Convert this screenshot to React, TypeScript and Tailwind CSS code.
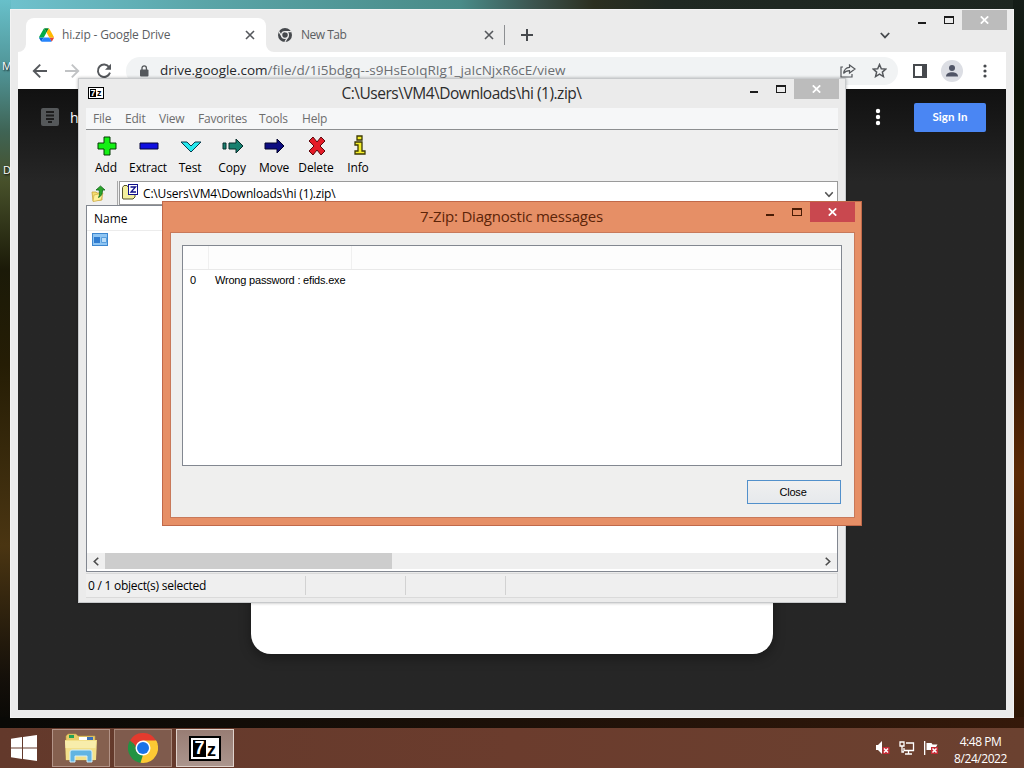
import React from "react";
import clsx from "clsx";

type IconProps = { className?: string };

const menuItems = [
  { label: "File", width: "w-[32px]" },
  { label: "Edit", width: "w-[34px]" },
  { label: "View", width: "w-[39px]" },
  { label: "Favorites", width: "w-[61px]" },
  { label: "Tools", width: "w-[43px]" },
  { label: "Help", width: "w-[40px]" },
];

const ArrowIcon = ({ className }: IconProps) => (
  <svg className={className} width="16" height="16" viewBox="0 0 16 16" fill="none" stroke="currentColor" strokeWidth="1.9">
    <path d="M15 8H2M8.2 1.6L1.8 8l6.4 6.4" />
  </svg>
);

const ReloadIcon = () => (
  <svg width="16" height="16" viewBox="0 0 16 16" fill="none">
    <path d="M13.2 4.2A6.2 6.2 0 1 0 14 9.6" stroke="#55585c" strokeWidth="1.9" />
    <path d="M15 .8v6H9z" fill="#55585c" />
  </svg>
);

const DriveIcon = () => (
  <svg width="15" height="14" viewBox="0 0 87.3 78">
    <path d="M6.6 66.85l3.85 6.65c.8 1.4 1.95 2.5 3.3 3.3L27.5 53H0c0 1.55.4 3.1 1.2 4.5z" fill="#0066da" />
    <path d="M43.65 25L29.9 1.2c-1.35.8-2.5 1.9-3.3 3.3l-25.4 44A9.06 9.06 0 0 0 0 53h27.5z" fill="#00ac47" />
    <path d="M73.55 76.8c1.35-.8 2.5-1.9 3.3-3.3l1.6-2.75L86.1 57.5c.8-1.4 1.2-2.95 1.2-4.5H59.8l5.85 11.5z" fill="#ea4335" />
    <path d="M43.65 25L57.4 1.2C56.05.4 54.5 0 52.9 0H34.4c-1.6 0-3.15.45-4.5 1.2z" fill="#00832d" />
    <path d="M59.8 53H27.5L13.75 76.8c1.35.8 2.9 1.2 4.5 1.2h50.8c1.6 0 3.15-.45 4.5-1.2z" fill="#2684fc" />
    <path d="M73.4 26.5L60.7 4.5c-.8-1.4-1.95-2.5-3.3-3.3L43.65 25 59.8 53h27.45c0-1.55-.4-3.1-1.2-4.5z" fill="#ffba00" />
  </svg>
);

const ChromeMonoIcon = () => (
  <svg width="14" height="14" viewBox="0 0 14 14" fill="none">
    <circle cx="7" cy="7" r="7" fill="#46494d" />
    <circle cx="7" cy="7" r="3.4" fill="#46494d" stroke="#ebebeb" strokeWidth="1.3" />
    <path d="M7 3.6h6.3M4 8.7L.9 3.5M10 8.7l-3.1 5.2" stroke="#ebebeb" strokeWidth="1.2" />
  </svg>
);

const ChromeIcon = () => (
  <svg width="30" height="30" viewBox="0 0 48 48">
    <path d="M24 24L3.2 12A24 24 0 0 1 44.8 12z" fill="#e33b2e" />
    <path d="M24 24L44.8 12A24 24 0 0 1 24 48z" fill="#fcc934" />
    <path d="M24 24L24 48A24 24 0 0 1 3.2 12z" fill="#229342" />
    <path d="M24 12h20.8a24 24 0 0 1 2.5 6L34 20z" fill="#fcc934" />
    <path d="M34.4 30L24 48l-4-.4 4-13z" fill="#fcc934" />
    <path d="M13.6 30L3.2 12 24 12v5z" fill="#e33b2e" />
    <path d="M13.6 30L3.2 12l6 5 6 9z" fill="#229342" />
    <circle cx="24" cy="24" r="12" fill="#fff" />
    <circle cx="24" cy="24" r="9.6" fill="#1a73e8" />
  </svg>
);

const CrossIcon = ({ className }: IconProps) => (
  <svg className={className} width="10" height="10" viewBox="0 0 10 10" fill="none" stroke="currentColor" strokeWidth="1.6">
    <path d="M1 1l8 8M9 1L1 9" />
  </svg>
);

const ChevronIcon = ({ className }: IconProps) => (
  <svg className={className} width="10" height="7" viewBox="0 0 10 7" fill="none" stroke="currentColor" strokeWidth="1.8">
    <path d="M.8 1L5 5.4 9.2 1" />
  </svg>
);

const SevenZip = ({ big }: { big?: boolean }) => (
  <div
    className={clsx(
      "flex shrink-0 items-center justify-center border-black bg-white font-['Liberation_Sans'] font-bold leading-none",
      big ? "h-[25px] w-[32px] border-2 text-[18px]" : "h-[12px] w-[16px] border text-[9px]"
    )}
  >
    <span className={clsx("flex items-center justify-center bg-black text-white", big ? "h-[17px] w-[13px]" : "h-[8px] w-[6px]")}>
      7
    </span>
    <span className={clsx("text-black", big ? "w-[11px] pt-[3px] pl-px" : "w-[6px] pl-px")}>z</span>
  </div>
);

// minimize / maximize / close trio at the right end of a title bar
const WindowControls = ({ active }: { active?: boolean }) => (
  <div className={clsx("flex h-[20px] shrink-0", active ? "text-[#4a1c05]" : "text-[#1c1c1c]")}>
    <svg width="52" height="20" viewBox="0 0 52 20" shapeRendering="crispEdges">
      <path d="M8 12h8v2H8zM34 6h10v8H34zm1 2v5h8V8z" fill="currentColor" fillRule="evenodd" />
    </svg>
    <div className={clsx("flex w-[45px] items-center justify-center", active ? "bg-[#c9484f]" : "bg-[#bcbcbc]")}>
      <svg width="9" height="8" viewBox="0 0 9 8" fill="none" stroke="#fff" strokeWidth="1.8">
        <path d="M.8.4l7.4 7.2M8.2.4L.8 7.6" />
      </svg>
    </div>
  </div>
);

const DriveWindow = () => (
  <div className="absolute left-[10px] top-[9px] flex h-[709px] w-[1004px] flex-col border border-[#f3f3f3] bg-[#ebebeb] px-[7px] pb-[7px]">
    <div className="flex h-[42px] shrink-0">
      <div className="relative ml-[8px] mt-[8px] flex w-[240px] items-center rounded-t-[8px] bg-white pl-[13px]">
        <DriveIcon />
        <span className="ml-[8px] w-[183px] text-[12px] tracking-[-0.16px] text-[#5b5e62]">hi.zip - Google Drive</span>
        <CrossIcon className="text-[#55585c]" />
        <svg className="absolute -left-[8px] bottom-0" width="256" height="8" viewBox="0 0 256 8" fill="#fff">
          <path d="M0 8a8 8 0 0 0 8-8v8zM248 0a8 8 0 0 0 8 8h-8z" />
        </svg>
      </div>
      <div className="mt-[8px] flex items-center pl-[12px]">
        <ChromeMonoIcon />
        <span className="ml-[9px] w-[183px] text-[12px] tracking-[-0.5px] text-[#5b5e62]">New Tab</span>
        <CrossIcon className="text-[#55585c]" />
        <div className="ml-[10px] h-[20px] w-px bg-[#8d8f92]" />
        <svg className="ml-[16px]" width="12" height="12" viewBox="0 0 12 12" stroke="#46494d" strokeWidth="2">
          <path d="M6 0v12M0 6h12" />
        </svg>
      </div>
      <div className="ml-auto mr-[20px] mt-[22px]">
        <ChevronIcon className="text-[#46494d]" />
      </div>
      <div className="-mr-px">
        <WindowControls />
      </div>
    </div>

    <div className="flex h-[37px] shrink-0 items-center bg-white pl-[14px] text-[#55585c]">
      <ArrowIcon />
      <ArrowIcon className="ml-[16px] rotate-180 text-[#c1c3c5]" />
      <div className="ml-[16px]">
        <ReloadIcon />
      </div>
      <div className="ml-[14px] flex h-[28px] w-[772px] items-center rounded-full bg-[#f1f3f4] pl-[13px]">
        <svg width="10" height="12" viewBox="0 0 10 12">
          <rect x="1" y="4.5" width="8.5" height="7" rx="1" fill="#55585c" />
          <path d="M3 5V3a2.2 2.2 0 0 1 4.4 0v2" fill="none" stroke="#55585c" strokeWidth="1.3" />
        </svg>
        <span className="ml-[11px] whitespace-nowrap text-[13.5px] text-[#6b6e72]">
          <span className="text-[#26282b]">drive.google.com</span>/file/d/1i5bdgq--s9HsEoIqRIg1_jaIcNjxR6cE/view
        </span>
        <svg className="ml-auto" width="16" height="14" viewBox="0 0 16 14" fill="none" stroke="#55585c" strokeWidth="1.2">
          <path d="M3 3H1v10h11v-3M9.5 1l5.5 4-5.5 4V6.6C6.5 6.6 5 7.5 3.6 9.5 4 6 6 3.7 9.5 3.4z" />
        </svg>
        <svg className="ml-[16px] mr-[11px]" width="15" height="15" viewBox="0 0 24 24" fill="none" stroke="#55585c" strokeWidth="2.4">
          <path d="M12 2.5l2.9 6.7 7.2.6-5.5 4.8 1.7 7.1L12 17.9l-6.3 3.8 1.7-7.1L1.9 9.8l7.2-.6z" />
        </svg>
      </div>
      <svg className="ml-[15px]" width="14" height="14" viewBox="0 0 14 14">
        <path d="M0 0h14v14H0zM2 2v10h7V2z" fill="#46494d" fillRule="evenodd" />
      </svg>
      <svg className="ml-[14px]" width="22" height="22" viewBox="0 0 22 22">
        <circle cx="11" cy="11" r="11" fill="#dcdee4" />
        <circle cx="11" cy="8" r="3" fill="#505566" />
        <path d="M5 16.5c0-3 3-4.300 6-4.300s6 1.300 6 4.300z" fill="#505566" />
      </svg>
      <svg className="ml-[20px]" width="4" height="14" viewBox="0 0 4 14" fill="#46494d">
        <circle cx="2" cy="2" r="1.6" />
        <circle cx="2" cy="7" r="1.6" />
        <circle cx="2" cy="12" r="1.6" />
      </svg>
    </div>

    <div className="flex flex-1 flex-col justify-between overflow-hidden bg-linear-to-b from-[#111] via-[#262626] via-15% to-[#262626]">
      <div className="flex h-[56px] items-center pl-[23px] pr-[20px] text-white">
        <svg width="18" height="18" viewBox="0 0 18 18">
          <rect width="18" height="18" rx="2" fill="#55585a" />
          <path d="M5 4h8M5 7.5h8M5 11h8M7 14h4" stroke="#1d1d1d" strokeWidth="1.8" />
        </svg>
        <span className="ml-[11px] text-[14px]">h</span>
        <svg className="ml-auto" width="6" height="18" viewBox="0 0 6 18" fill="#fff">
          <circle cx="3" cy="3" r="2.2" />
          <circle cx="3" cy="9" r="2.2" />
          <circle cx="3" cy="15" r="2.2" />
        </svg>
        <button className="ml-[33px] h-[29px] w-[72px] rounded-[2px] bg-[#4a86f3] font-['Lato'] text-[11.5px] font-bold tracking-[0.1px]">
          Sign In
        </button>
      </div>
      <div className="mx-auto mb-[56px] h-[90px] w-[522px] rounded-b-[20px] bg-white shadow-[0_4px_12px_rgba(0,0,0,0.35)]" />
    </div>
  </div>
);

const tools = [
  {
    label: "Add",
    icon: <path d="M9 3h6v6h6v6h-6v6H9v-6H3V9h6z" fill="#14f014" stroke="#053b05" />,
  },
  { label: "Extract", icon: <path d="M3 9h18v6H3z" fill="#0f0fe0" stroke="#04043c" /> },
  { label: "Test", icon: <path d="M2 8h6l4 4 4-4h6L12 18z" fill="#25e9ef" stroke="#063a4c" /> },
  {
    label: "Copy",
    icon: <path d="M2 9h3v6H2zM8 9h7V5l7 7-7 7v-4H8z" fill="#16806f" stroke="#062d2a" />,
  },
  { label: "Move", icon: <path d="M2 9h12V5l7 7-7 7v-4H2z" fill="#0c0c80" stroke="#02022c" /> },
  {
    label: "Delete",
    icon: <path d="M4 7l4-4 4 5 4-5 4 4-5 5 5 5-4 4-4-5-4 5-4-4 5-5z" fill="#e51c28" stroke="#5c070c" />,
  },
  {
    label: "Info",
    icon: <path d="M10 2h5v4h-5zM8 8h7v9h3v3H8v-3h3v-6H8z" fill="#f4ee2b" stroke="#3c3a05" strokeWidth="1.3" />,
  },
];

const FolderUpIcon = () => (
  <svg width="16" height="17" viewBox="0 0 16 17">
    <path d="M1 7h4l1 1h5v7l-9 1z" fill="#f5dc6e" stroke="#c8a33a" strokeWidth=".8" />
    <path d="M3 10l9-2-2 7-8 1.5z" fill="#fff09a" stroke="#c8a33a" strokeWidth=".6" />
    <path d="M5 5l4.5-4L14 5h-2.500c0 4-1 6-4 7.500C9 10 8.500 7 8 5z" fill="#2ca52c" stroke="#14691c" strokeWidth=".8" />
  </svg>
);

const ArchiveIcon = () => (
  <svg width="17" height="16" viewBox="0 0 17 16">
    <path d="M.5 3.5L2 1.500h3l1 1.500h7v10l-2 2H1l-.5-1z" fill="#f3ef9e" stroke="#55522b" />
    <rect x="6.5" y=".5" width="9" height="10" fill="#fff" stroke="#10108a" />
    <path d="M8.500 3h5l-4.500 5h5" fill="none" stroke="#10108a" strokeWidth="1.3" />
  </svg>
);

const FileManagerWindow = () => (
  <div className="absolute left-[78px] top-[78px] flex h-[525px] w-[768px] flex-col border border-[#c7c9cb] bg-[#ebebeb] px-[7px] pb-[5px] text-black shadow-[0_0_3px_rgba(0,0,0,0.3)]">
    <div className="flex h-[29px] shrink-0">
      <div className="pl-[2px] pt-[8px]">
        <SevenZip />
      </div>
      <div className="ml-[77px] flex-1 pt-px text-center text-[15.5px] leading-[26px] tracking-[-0.48px] text-[#2c2c2c]">
        C:\Users\VM4\Downloads\hi (1).zip\
      </div>
      <div className="-mr-px">
        <WindowControls />
      </div>
    </div>
    <div className="flex h-[22px] shrink-0 items-center border-b border-[#8c8e90] bg-[#f6f7f8] pl-[7px] text-[12px] tracking-[-0.2px] text-[#6d6d6d]">
      {menuItems.map((item) => (
        <span key={item.label} className={clsx("shrink-0", item.width)}>
          {item.label}
        </span>
      ))}
    </div>
    <div className="flex h-[51px] shrink-0 bg-[#efefef]">
      {tools.map((tool) => (
        <div key={tool.label} className="-ml-px mr-px flex w-[42px] flex-col items-center pt-[4px]">
          <svg className="ml-[2px]" width="24" height="24" viewBox="0 0 24 24">
            {tool.icon}
          </svg>
          <span className="pt-px text-[12px] leading-[18px] tracking-[-0.15px]">{tool.label}</span>
        </div>
      ))}
    </div>
    <div className="flex h-[24px] shrink-0 bg-[#efefef]">
      <div className="flex w-[32px] items-center border-r border-[#a8a8a8] pl-[5px]">
        <FolderUpIcon />
      </div>
      <div className="ml-px flex flex-1 items-start border border-[#9a9a9a] bg-white pl-[2px] pr-[3px] pt-[2px]">
        <ArchiveIcon />
        <span className="ml-[4px] flex-1 pt-px text-[12px] leading-[18px] tracking-[-0.18px]">C:\Users\VM4\Downloads\hi (1).zip\</span>
        <ChevronIcon className="mt-[7px] scale-90 text-[#555]" />
      </div>
    </div>
    <div className="flex h-[367px] shrink-0 flex-col border border-[#828790] bg-white">
      <div className="flex h-[25px] w-full items-center border-b border-[#ececec] pl-[7px] pt-[2px] text-[12px]">Name</div>
      <div className="pl-[5px] pt-[2px]">
        <svg width="16" height="13" viewBox="0 0 16 13">
          <rect x=".5" y=".5" width="15" height="12" fill="#8ec5f3" stroke="#3c86cf" />
          <path d="M2 4h6v6H2z" fill="#2f7cd0" />
          <path d="M9.500 4.500h5v5h-5z" fill="#b9dcf8" stroke="#5a9fdd" />
        </svg>
      </div>
      <div className="mt-auto mb-[2px] flex h-[16px] items-center bg-[#efefef] text-[#4c4c4c]">
        <div className="flex w-[18px] justify-center">
          <ChevronIcon className="scale-90 rotate-90" />
        </div>
        <div className="h-full w-[287px] bg-[#cdcdcd]" />
        <div className="ml-auto flex w-[18px] justify-center">
          <ChevronIcon className="scale-90 -rotate-90" />
        </div>
      </div>
    </div>
    <div className="mt-px flex flex-1 items-stretch border-y border-r border-[#dadada] bg-[#efefef] text-[12px] leading-[22px]">
      <span className="my-[2px] w-[220px] border-r border-[#d2d2d2] pl-[2px] leading-[19px] tracking-[-0.25px]">0 / 1 object(s) selected</span>
      <span className="my-[2px] w-[100px] border-r border-[#d2d2d2]" />
      <span className="my-[2px] w-[100px] border-r border-[#d2d2d2]" />
    </div>
  </div>
);

const DiagnosticDialog = () => (
  <div className="absolute left-[162px] top-[201px] flex h-[325px] w-[700px] flex-col border border-[#c0694a] bg-[#e68f66] px-[7px] pb-[7px] text-black">
    <div className="flex h-[30px] shrink-0">
      <div className="ml-[95px] flex-1 text-center text-[15px] leading-[28px] tracking-[-0.2px] text-[#5c2408]">
        7-Zip: Diagnostic messages
      </div>
      <div className="-mr-px">
        <WindowControls active />
      </div>
    </div>
    <div className="-mr-px flex flex-1 flex-col border border-[#c8795a] bg-[#efefee] pl-[11px] pr-[12px] pt-[12px]">
      <div className="h-[221px] border border-[#828790] bg-white font-['Liberation_Sans'] text-[11px] tracking-[-0.2px]">
        <div className="flex h-[24px] border-b border-[#e9e9e9] bg-[#fdfdfd]">
          <div className="w-[26px] border-r border-[#f0f0f0]" />
          <div className="w-[143px] border-r border-[#f0f0f0]" />
        </div>
        <div className="flex h-[20px] items-center pt-px">
          <span className="w-[25px] pl-[7px]">0</span>
          <span className="pl-[7px]">Wrong password : efids.exe</span>
        </div>
      </div>
      <button className="mr-px mt-[14px] h-[24px] w-[94px] self-end border border-[#5290cb] bg-linear-to-b from-[#f0f0f0] to-[#e6e9ec] pr-[2px] font-['Liberation_Sans'] text-[11px] tracking-[-0.2px]">
        Close
      </button>
    </div>
  </div>
);

const Taskbar = () => (
  <div className="absolute inset-x-0 bottom-0 flex h-[40px] items-center bg-linear-to-r from-[#63392b] via-[#6b3c2d] to-[#6b4130]">
    <svg className="ml-[11px]" width="26" height="26" viewBox="0 0 26 26" fill="#fff">
      <path d="M0 3.700l11-1.600v10.400H0zM12 2l14-2v12.500H12zM0 13.500h11v10.400L0 22.300zM12 13.500h14V26l-14-2z" />
    </svg>
    <div className="ml-[15px] flex h-[38px] gap-[4px]">
      <div className="flex w-[58px] items-center justify-center border border-[#b39488] bg-[#85604f]">
        <svg width="32" height="30" viewBox="0 0 32 30">
          <path d="M1 3l2-2h8l2 2h17v24H1z" fill="#e9cb68" stroke="#b99b45" strokeWidth=".6" />
          <path d="M4 2h5v3H4z" fill="#25a256" />
          <path d="M14 4h8v4h-8z" fill="#fff" />
          <path d="M22 4h6v3h-6z" fill="#3c6fb5" />
          <path d="M0 7h32l-1 20H1z" fill="#f3e08a" />
          <path d="M0 8h31l-.5 7H.5z" fill="#f8edab" />
          <path d="M5 29V19q0-2 2-2h18q2 0 2 2v10h-5v-6H10v6z" fill="#62b4e2" stroke="#d3effa" />
        </svg>
      </div>
      <div className="flex w-[58px] items-center justify-center border border-[#a78779] bg-[#7f5b4d]">
        <ChromeIcon />
      </div>
      <div className="flex w-[58px] items-center justify-center border border-[#e0d2cb] bg-linear-to-b from-[#987d74] to-[#ab958d]">
        <SevenZip big />
      </div>
    </div>
    <div className="ml-auto flex items-center gap-[8px]">
      <svg width="16" height="16" viewBox="0 0 16 16">
        <path d="M1 5h2l4-4v13l-4-4H1z" fill="#fff" />
        <path d="M7.500 7h7v7h-7z" fill="#c62c36" />
        <path d="M9 8.500l4 4M13 8.500l-4 4" stroke="#fff" strokeWidth="1.5" />
      </svg>
      <svg width="16" height="16" viewBox="0 0 16 16" fill="none" stroke="#fff" strokeWidth="1.3">
        <path d="M7 3h7.500v7.500H5V8M9.500 10.500v3M6 14h7M1 2h4v4H1zM3 6v6h2" />
      </svg>
      <svg width="16" height="16" viewBox="0 0 16 16">
        <path d="M1 1h1.300v14H1zM3.500 3h5l1 1.500h5L13 7l1.500 3h-11z" fill="#fff" />
        <path d="M8 7h7v7H8z" fill="#c62c36" />
        <path d="M9.500 8.500l4 4M13.500 8.500l-4 4" stroke="#fff" strokeWidth="1.5" />
      </svg>
    </div>
    <div className="ml-[8px] w-[77px] whitespace-nowrap pr-[10px] pt-[3px] text-center text-[12px] leading-[17px] tracking-[-0.45px] text-white">
      <div>4:48 PM</div>
      <div>8/24/2022</div>
    </div>
  </div>
);

const App = () => {
  return (
    <div className="relative h-[768px] w-[1024px] overflow-hidden bg-black font-['Open_Sans',sans-serif]">
      {/* wallpaper strips that stay visible round the windows */}
      <div className="absolute inset-x-0 top-0 h-[10px] bg-[linear-gradient(90deg,#70c3cf_0%,#5aa5a8_20%,#498b88_45%,#3c5550_52%,#2c2f20_58%,#202923_65%,#1d2620_100%)]" />
      <div className="absolute left-0 top-0 h-[728px] w-[11px] bg-[linear-gradient(#68c0ca_0%,#4f9294_10%,#3f6455_18%,#47502a_25%,#1b1a08_37%,#251d05_50%,#4a3512_75%,#15100a_93%,#080805_100%)]" />
      <div className="absolute right-0 top-0 h-[728px] w-[11px] bg-[linear-gradient(#151d18_0%,#0e1509_12%,#1c1908_35%,#3a1b06_50%,#5b2905_65%,#3b1a04_90%,#2b1606_100%)]" />
      <div className="absolute inset-x-0 top-[717px] h-[11px] bg-linear-to-r from-[#090906] via-[#1c1008] to-[#35190a]" />
      <div className="absolute left-[2px] top-[58px] text-[11px] text-white [text-shadow:1px_1px_2px_#000]">M</div>
      <div className="absolute left-[3px] top-[162px] text-[11px] text-white [text-shadow:1px_1px_2px_#000]">D</div>
      <DriveWindow />
      <FileManagerWindow />
      <DiagnosticDialog />
      <Taskbar />
    </div>
  );
};

export default App;
